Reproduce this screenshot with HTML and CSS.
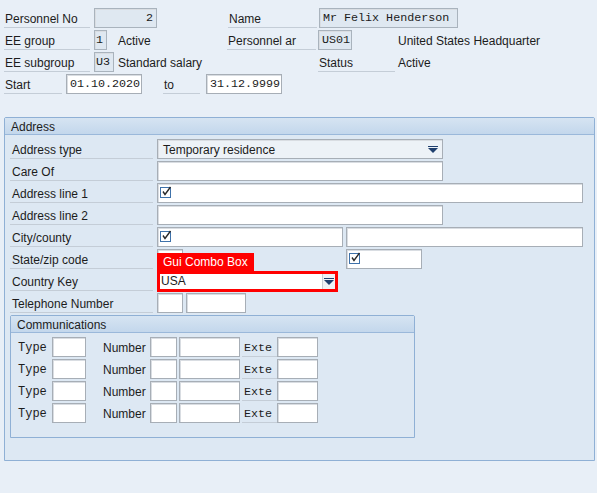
FILE: index.html
```html
<!DOCTYPE html>
<html>
<head>
<meta charset="utf-8">
<link rel="stylesheet" href="styles.css">
</head>
<body>
<div class="header">
  <div class="row">
    <div class="lbl w86">Personnel No</div>
    <div class="fld ro num w63 ml4">2</div>
    <div class="lbl w89 ml71">Name</div>
    <div class="fld ro mono w139 ml2">Mr Felix Henderson</div>
  </div>
  <div class="row">
    <div class="lbl w86">EE group</div>
    <div class="fld ro mono w13 ml4">1</div>
    <div class="txt ml11 w109">Active</div>
    <div class="lbl w89">Personnel ar</div>
    <div class="fld ro mono w34 ml2">US01</div>
    <div class="txt ml46">United States Headquarter</div>
  </div>
  <div class="row">
    <div class="lbl w86">EE subgroup</div>
    <div class="fld ro mono w20 ml4">U3</div>
    <div class="txt ml4 w200">Standard salary</div>
    <div class="lbl w77">Status</div>
    <div class="txt ml3">Active</div>
  </div>
  <div class="row">
    <div class="lbl w58">Start</div>
    <div class="fld wh mono w76 ml4">01.10.2020</div>
    <div class="lbl w37 ml21">to</div>
    <div class="fld wh mono w76 ml6">31.12.9999</div>
  </div>
</div>

<div class="group addr">
  <div class="ghead">Address</div>
  <div class="gbody">
    <div class="arow">
      <div class="alb">Address type</div>
      <div class="combo w286"><span>Temporary residence</span><span class="arrow"></span></div>
    </div>
    <div class="arow">
      <div class="alb">Care Of</div>
      <div class="fld wh w286"></div>
    </div>
    <div class="arow">
      <div class="alb">Address line 1</div>
      <div class="fld wh w426"><svg class="chk" width="13" height="12" viewBox="0 0 13 12"><rect x="0.5" y="1.5" width="10" height="10" fill="#fff" stroke="#3f72aa"/><path d="M3 5.5 L5 8.5 L10.5 1" fill="none" stroke="#2a2a2a" stroke-width="1.4"/></svg></div>
    </div>
    <div class="arow">
      <div class="alb">Address line 2</div>
      <div class="fld wh w286"></div>
    </div>
    <div class="arow">
      <div class="alb">City/county</div>
      <div class="fld wh w186"><svg class="chk" width="13" height="12" viewBox="0 0 13 12"><rect x="0.5" y="1.5" width="10" height="10" fill="#fff" stroke="#3f72aa"/><path d="M3 5.5 L5 8.5 L10.5 1" fill="none" stroke="#2a2a2a" stroke-width="1.4"/></svg></div>
      <div class="fld wh w237 ml3"></div>
    </div>
    <div class="arow">
      <div class="alb">State/zip code</div>
      <div class="zipwrap">
        <div class="fld wh w26"></div>
        <div class="tag">Gui Combo Box</div>
      </div>
      <div class="fld wh w76 ml163"><svg class="chk" width="13" height="12" viewBox="0 0 13 12"><rect x="0.5" y="1.5" width="10" height="10" fill="#fff" stroke="#3f72aa"/><path d="M3 5.5 L5 8.5 L10.5 1" fill="none" stroke="#2a2a2a" stroke-width="1.4"/></svg></div>
    </div>
    <div class="arow">
      <div class="alb">Country Key</div>
      <div class="combo hl w181"><span>USA</span><span class="btn"><span class="arrow"></span></span></div>
    </div>
    <div class="arow">
      <div class="alb">Telephone Number</div>
      <div class="fld wh w26"></div>
      <div class="fld wh w60 ml3"></div>
    </div>

    <div class="group comm">
      <div class="ghead">Communications</div>
      <div class="cbody">
        <div class="crow">
          <div class="cl mono">Type</div><div class="fld wh w34"></div>
          <div class="cl2">Number</div><div class="fld wh w27"></div><div class="fld wh w61 ml2"></div>
          <div class="cl3 mono">Exte</div><div class="fld wh w41"></div>
        </div>
        <div class="crow">
          <div class="cl mono">Type</div><div class="fld wh w34"></div>
          <div class="cl2">Number</div><div class="fld wh w27"></div><div class="fld wh w61 ml2"></div>
          <div class="cl3 mono">Exte</div><div class="fld wh w41"></div>
        </div>
        <div class="crow">
          <div class="cl mono">Type</div><div class="fld wh w34"></div>
          <div class="cl2">Number</div><div class="fld wh w27"></div><div class="fld wh w61 ml2"></div>
          <div class="cl3 mono">Exte</div><div class="fld wh w41"></div>
        </div>
        <div class="crow">
          <div class="cl mono">Type</div><div class="fld wh w34"></div>
          <div class="cl2">Number</div><div class="fld wh w27"></div><div class="fld wh w61 ml2"></div>
          <div class="cl3 mono">Exte</div><div class="fld wh w41"></div>
        </div>
      </div>
    </div>
  </div>
</div>
</body>
</html>
```
FILE: styles.css
```css
* { box-sizing: border-box; }
html, body { margin: 0; padding: 0; }
body {
  background: #e8eff7;
  font-family: "Liberation Sans", Arial, sans-serif;
  font-size: 12px;
  color: #1c1c1c;
  width: 597px;
  height: 493px;
  overflow: hidden;
}
.header { padding: 8px 0 0 4px; }
.row { display: flex; align-items: stretch; height: 20px; margin-bottom: 2px; }
.lbl {
  height: 20px; line-height: 17px; padding: 3px 0 0 1px;
  border-bottom: 1px solid #c4cdd7;
  white-space: nowrap; overflow: hidden;
  font-size: 12px;
}
.txt { line-height: 17px; padding-top: 3px; white-space: nowrap; font-size: 12px; flex: none; }
.fld {
  height: 20px; border: 1px solid #a7aeb6;
  box-shadow: inset 1px 1px 0 #d9dde2;
  line-height: 17px; padding: 1px 3px 0;
  white-space: nowrap; overflow: hidden; position: relative;
  flex: none;
}
.ro { background: #dfe8f1; border-color: #a9b3bd; }
.wh { background: #ffffff; }
.num { text-align: right; font-family: "Liberation Mono", "Courier New", monospace; font-size: 11.7px; }
.mono { font-family: "Liberation Mono", "Courier New", monospace; font-size: 11.7px; }
.w13 { width: 13px; padding: 1px 1px 0; }
.w20 { width: 20px; padding: 1px 1px 0; }
.w26 { width: 26px; }
.w27 { width: 27px; }
.w34 { width: 34px; }
.w37 { width: 37px; }
.w41 { width: 41px; }
.w58 { width: 58px; }
.w60 { width: 60px; }
.w61 { width: 61px; }
.w63 { width: 63px; }
.w76 { width: 76px; }
.w77 { width: 77px; }
.w86 { width: 86px; }
.w89 { width: 89px; }
.w109 { width: 109px; }
.w139 { width: 139px; }
.w181 { width: 181px; }
.w186 { width: 186px; }
.w200 { width: 200px; }
.w237 { width: 237px; }
.w286 { width: 286px; }
.w426 { width: 426px; }
.ml2 { margin-left: 2px; }
.ml3 { margin-left: 3px; }
.ml4 { margin-left: 4px; }
.ml6 { margin-left: 6px; }
.ml11 { margin-left: 11px; }
.ml21 { margin-left: 21px; }
.ml46 { margin-left: 46px; }
.ml71 { margin-left: 71px; }
.ml163 { margin-left: 163px; }

.group {
  border: 1px solid #8fb0d5;
  background: #dde8f3;
  border-radius: 2px 2px 0 0;
}
.addr { margin: 23px 2px 0 4px; height: 344px; }
.ghead {
  height: 17px; line-height: 16px;
  padding: 1px 0 0 6px;
  background: linear-gradient(#d6e4f2, #c3d7ec);
  border-bottom: 1px solid #9ab8da;
  font-size: 12px;
}
.gbody { padding: 4px 0 0 5px; }
.arow { display: flex; height: 20px; margin-bottom: 2px; }
.alb {
  width: 143px; margin-right: 4px; height: 20px;
  line-height: 17px; padding: 3px 0 0 2px;
  border-bottom: 1px solid #c4cdd7;
  font-size: 12px;
  white-space: nowrap;
}
.combo {
  height: 20px; border: 1px solid #a7aeb6;
  background: #edf2f7;
  display: flex; align-items: center; justify-content: space-between;
  padding: 2px 4px 0 5px;
  font-size: 12px;
  box-shadow: inset 1px 1px 0 #d9dde2;
}
.arrow {
  width: 0; height: 0;
  border-left: 5px solid transparent; border-right: 5px solid transparent;
  border-top: 5px solid #1f3f6e;
  position: relative;
}
.arrow::before {
  content: ""; position: absolute; left: -5px; top: -7px;
  width: 10px; height: 1px; background: #1f3f6e;
}
.combo.hl {
  background: #fff; border: 3px solid #ff0000; padding: 0 0 0 1px;
  height: 21px;
  box-shadow: none;
  align-items: stretch;
}
.combo.hl > span:first-child { line-height: 15px; }
.btn {
  width: 13px; border-left: 1px solid #c9ced4; background: #eef1f5;
  display: flex; align-items: center; justify-content: center;
  padding-top: 2px;
}
.zipwrap { position: relative; width: 26px; }
.tag {
  position: absolute; left: 0; top: 4px;
  width: 97px; height: 18px;
  background: #ff0000; color: #fff;
  line-height: 17px; padding: 1px 0 0 6px;
  font-size: 12px;
  white-space: nowrap; z-index: 2;
}
.chk {
  position: absolute; left: 2px; top: 2px;
  display: block;
}
.comm { width: 405px; height: 123px; margin-top: 2px; margin-left: 0; }
.cbody { padding: 4px 0 0 7px; }
.crow { display: flex; height: 20px; margin-bottom: 2px; align-items: stretch; }
.cl { width: 34px; line-height: 17px; padding-top: 3px; font-size: 12px; }
.cl2 { width: 47px; margin-left: 17px; line-height: 17px; padding-top: 3px; }
.cl3 { width: 35px; line-height: 17px; padding: 3px 0 0 2px; border-bottom: 1px solid #c4cdd7; margin-left: 2px; }
```
